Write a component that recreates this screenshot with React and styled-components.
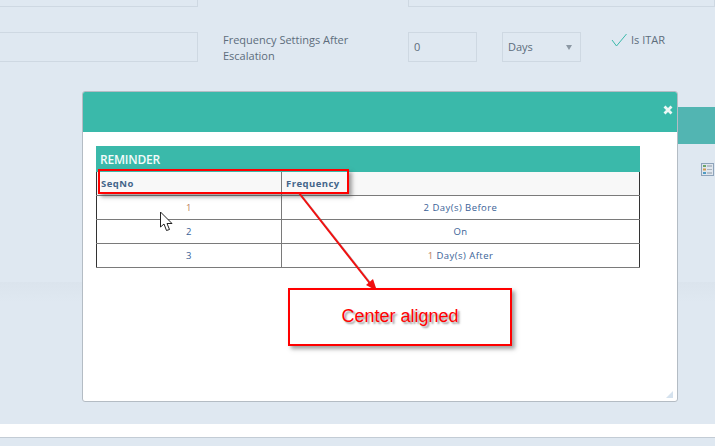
import React from 'react';
import styled, { createGlobalStyle } from 'styled-components';

const GlobalStyle = createGlobalStyle`
  html, body {
    margin: 0;
    padding: 0;
    background: #dfe8f1;
  }
`;

const Page = styled.div`
  position: relative;
  width: 715px;
  height: 446px;
  overflow: hidden;
  display: flex;
  flex-direction: column;
  background: #dfe8f1;
  font-family: 'Open Sans', sans-serif;
  color: #5d6d7c;
`;

const TopRow = styled.div`
  display: flex;
  height: 7px;
  margin-bottom: 25px;
`;

const TopInput = styled.div`
  box-sizing: border-box;
  height: 7px;
  width: ${props => props.width}px;
  margin-left: ${props => props.offset || 0}px;
  border: 1px solid #ced8e2;
  border-top: 0;
  border-left-width: ${props => (props.offset ? 1 : 0)}px;
`;

const FormRow = styled.div`
  display: flex;
  align-items: flex-start;
  height: 30px;
`;

const Field = styled.div`
  box-sizing: border-box;
  width: ${props => props.width}px;
  height: 30px;
  margin-left: ${props => props.offset || 0}px;
  padding: 0 5px 2px;
  border: 1px solid #ced8e2;
  border-left-width: ${props => (props.offset ? 1 : 0)}px;
  display: flex;
  align-items: center;
  justify-content: space-between;
  font-size: 11px;
`;

const FieldLabel = styled.div`
  width: 160px;
  margin-left: 25px;
  margin-top: -1px;
  font-size: 11px;
  line-height: 16px;
  padding-top: 1px;
`;

const Caret = styled.span`
  width: 0;
  height: 0;
  border-left: 3px solid transparent;
  border-right: 3px solid transparent;
  border-top: 5px solid #8c98a4;
  margin: 2px 3px 0 0;
`;

const CheckField = styled.div`
  display: flex;
  align-items: center;
  gap: 4px;
  margin-left: 30px;
  margin-top: -1px;
  height: 17px;
  font-size: 11px;
`;

const SidePanelHead = styled.div`
  margin: 45px 0 0 auto;
  width: 100px;
  height: 37px;
  flex: none;
  background: #52b5b2;
`;

const GridIcon = styled.svg`
  display: block;
  margin: 19px 1px 0 auto;
  flex: none;
`;

const Band = styled.div`
  margin-top: 106px;
  height: 20px;
  flex: none;
  background: linear-gradient(#dbe4ed, #dfe8f1);
`;

const WhiteStrip = styled.div`
  margin-top: 122px;
  height: 13px;
  flex: none;
  background: #ffffff;
  border-bottom: 1px solid #c3ccd5;
`;

const Modal = styled.div`
  position: absolute;
  left: 82px;
  top: 91px;
  box-sizing: border-box;
  width: 596px;
  height: 311px;
  background: #ffffff;
  border: 1px solid #b4bcc4;
  border-radius: 3px;
  overflow: hidden;
`;

const ModalHeader = styled.div`
  height: 40px;
  background: #3ab9aa;
  display: flex;
  justify-content: flex-end;
  align-items: center;
  padding-right: 4px;
`;

const CloseIcon = styled.svg`
  display: block;
  margin-top: -5px;
`;

const ModalBody = styled.div`
  padding: 14px 37px 0 13px;
`;

const ReminderTitle = styled.div`
  height: 26px;
  background: #3ab9aa;
  color: #f4fbfa;
  font-size: 12px;
  font-weight: 600;
  letter-spacing: -0.2px;
  line-height: 27px;
  padding-left: 4px;
`;

const ReminderTable = styled.table`
  width: 544px;
  table-layout: fixed;
  border-collapse: collapse;
  border: 1px solid #333333;
  border-top: 0;
  font-size: 9.5px;
  letter-spacing: 0.45px;
  color: #3a6297;
`;

const HeadCell = styled.th`
  box-sizing: border-box;
  height: 23px;
  padding: 0 4px;
  text-align: left;
  font-weight: 700;
  background: #f8f8f8;
  color: #44658a;
  border-right: 1px solid #7a7a7a;
  border-bottom: 1px solid #7a7a7a;
  &:last-child {
    border-right: 0;
  }
`;

const BodyCell = styled.td`
  box-sizing: border-box;
  height: 24px;
  padding: 0;
  text-align: center;
  border-right: 1px solid #7a7a7a;
  border-bottom: 1px solid #7a7a7a;
  &:last-child {
    border-right: 0;
  }
`;

const Num = styled.span`
  color: #b9805a;
`;

const ResizeGrip = styled.svg`
  position: absolute;
  right: 4px;
  bottom: 3px;
`;

const Callout = styled.div`
  position: absolute;
  box-sizing: border-box;
  left: ${props => props.left}px;
  top: ${props => props.top}px;
  width: ${props => props.width}px;
  height: ${props => props.height}px;
  border: 2.5px solid #ff0000;
  box-shadow: 3px 3px 4px rgba(70, 70, 70, 0.5);
`;

const CalloutBox = styled(Callout)`
  background: #ffffff;
  display: flex;
  align-items: center;
  justify-content: center;
  color: #ff0000;
  font-family: 'Liberation Sans', Arial, sans-serif;
  font-size: 18px;
  padding-bottom: 2px;
  text-shadow: 2px 2px 2px rgba(70, 70, 70, 0.55);
`;

const ArrowLayer = styled.svg`
  position: absolute;
  left: 0;
  top: 0;
`;

const rows = [
  { id: 1, seq: <Num>1</Num>, freq: '2 Day(s) Before' },
  { id: 2, seq: '2', freq: 'On' },
  { id: 3, seq: '3', freq: <><Num>1</Num> Day(s) After</> },
];

const App = () => (
  <Page>
    <GlobalStyle />
    <TopRow>
      <TopInput width={198} />
      <TopInput width={307} offset={210} />
    </TopRow>
    <FormRow>
      <Field width={198} />
      <FieldLabel>Frequency Settings After Escalation</FieldLabel>
      <Field width={69} offset={25}>0</Field>
      <Field width={79} offset={25}>Days<Caret /></Field>
      <CheckField>
        <svg width="16" height="14" viewBox="0 0 16 14">
          <path d="M1 7 L5.5 13 L15.5 1" fill="none" stroke="#3ab9aa" strokeWidth="1" />
        </svg>
        Is ITAR
      </CheckField>
    </FormRow>
    <SidePanelHead />
    <GridIcon width="13" height="13" viewBox="0 0 13 13">
      <rect x="0.5" y="0.5" width="12" height="12" fill="#dfe6ee" stroke="#8ea3ba" />
      <rect x="2" y="2" width="3" height="2" fill="#6aa56a" />
      <rect x="2" y="5.5" width="3" height="2" fill="#d09a50" />
      <rect x="2" y="9" width="3" height="2" fill="#4e9bc4" />
      <rect x="6" y="2.5" width="5" height="1" fill="#8e99a5" />
      <rect x="6" y="6" width="5" height="1" fill="#aab4be" />
      <rect x="6" y="9.5" width="5" height="1" fill="#8e99a5" />
    </GridIcon>
    <Band />
    <WhiteStrip />

    <Modal>
      <ModalHeader>
        <CloseIcon width="10" height="10" viewBox="0 0 10 10">
          <path d="M1.5 1.5 L8.5 8.5 M8.5 1.5 L1.5 8.5" stroke="#eef8f6" strokeWidth="2.8" />
        </CloseIcon>
      </ModalHeader>
      <ModalBody>
        <ReminderTitle>REMINDER</ReminderTitle>
        <ReminderTable>
          <colgroup>
            <col style={{ width: 185 }} />
            <col />
          </colgroup>
          <thead>
            <tr>
              <HeadCell>SeqNo</HeadCell>
              <HeadCell>Frequency</HeadCell>
            </tr>
          </thead>
          <tbody>
            {rows.map(row => (
              <tr key={row.id}>
                <BodyCell>{row.seq}</BodyCell>
                <BodyCell>{row.freq}</BodyCell>
              </tr>
            ))}
          </tbody>
        </ReminderTable>
      </ModalBody>
      <ResizeGrip width="7" height="7" viewBox="0 0 7 7">
        <path d="M7 0 L7 7 L0 7 Z" fill="#d5e2ee" />
      </ResizeGrip>
    </Modal>

    <Callout left={98} top={169} width={251} height={25} />
    <ArrowLayer width="715" height="446" viewBox="0 0 715 446">
      <path d="M299 193 L373 287" stroke="#555555" strokeOpacity="0.35" strokeWidth="2" transform="translate(2 2)" />
      <path d="M299 193 L372 286" stroke="#f01010" strokeWidth="2" />
      <path d="M377 291 L366 285 L373 279 Z" fill="#f01010" />
      <path d="M160.5 212 L160.5 227 L164 224 L166.5 230.5 L169.5 229.5 L167 223.5 L172 223.5 Z" fill="#ffffff" stroke="#222222" strokeWidth="1" />
    </ArrowLayer>
    <CalloutBox left={288} top={288} width={224} height={58}>Center aligned</CalloutBox>
  </Page>
);

export default App;
